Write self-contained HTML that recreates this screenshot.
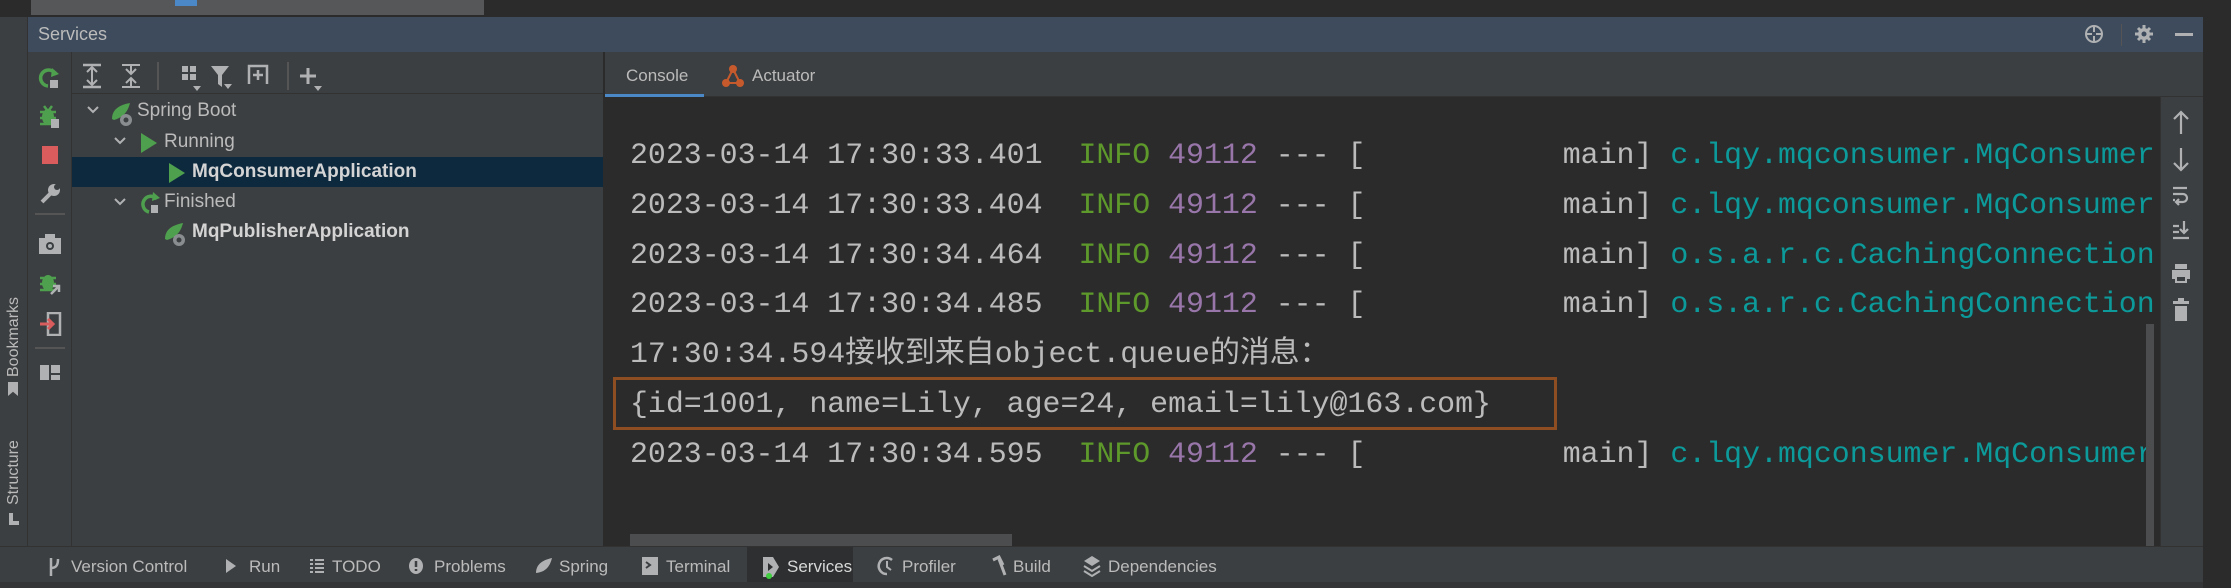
<!DOCTYPE html>
<html><head><meta charset="utf-8"><style>
*{margin:0;padding:0;box-sizing:border-box}
body{width:2231px;height:588px;overflow:hidden;background:#2b2b2b;position:relative;font-family:"Liberation Sans","Noto Sans CJK SC",sans-serif;color:#bbbbbb}
.a{position:absolute}
.t{position:absolute;white-space:pre;font-size:18px;line-height:20px}
.mono{position:absolute;white-space:pre;font-family:"Liberation Mono","Noto Sans CJK SC",monospace;font-size:29.9px;line-height:34px;color:#bbbbbb}
.g{color:#5e9a2b}.p{color:#9876aa}.c{color:#0c9a9a}
</style></head><body>
<div class="a" style="left:0;top:0;width:2231px;height:17px;background:#2b2b2b"></div>
<div class="a" style="left:31px;top:0;width:453px;height:15px;background:#555759"></div>
<div class="a" style="left:175px;top:0;width:22px;height:6px;background:#4a88c7"></div>
<div class="a" style="left:2203px;top:0;width:28px;height:588px;background:#2b2b2b"></div>
<div class="a" style="left:28px;top:17px;width:2175px;height:35px;background:#3d4b5c"></div>
<div class="t" style="left:38px;top:24px;font-size:18px;color:#bbbbbb">Services</div>
<svg class="a" style="left:2084px;top:24px" width="20" height="20" viewBox="0 0 20 20"><circle cx="10" cy="10" r="8" fill="none" stroke="#afb1b3" stroke-width="2"/><path d="M10 2v6M10 12v6M2 10h6M12 10h6" stroke="#afb1b3" stroke-width="2"/></svg>
<div class="a" style="left:2121px;top:24px;width:1px;height:22px;background:#555"></div>
<svg class="a" style="left:2135px;top:25px" width="18" height="18" viewBox="0 0 18 18"><circle cx="9" cy="9" r="6" fill="#afb1b3"/><path d="M9 0v18M0 9h18M3 3l12 12M15 3L3 15" stroke="#afb1b3" stroke-width="3"/><circle cx="9" cy="9" r="2.5" fill="#3d4b5c"/></svg>
<div class="a" style="left:2175px;top:33px;width:18px;height:3px;background:#afb1b3"></div>
<div class="a" style="left:0;top:17px;width:28px;height:529px;background:#3c3f41;border-right:1px solid #323232"></div>
<div class="t" style="left:4px;top:377px;transform:rotate(-90deg);transform-origin:0 0;font-size:16px;color:#bbb">Bookmarks</div>
<div class="a" style="left:8px;top:382px;width:10px;height:14px;background:#afb1b3;clip-path:polygon(0 0,100% 0,100% 100%,50% 70%,0 100%)"></div>
<div class="t" style="left:4px;top:505px;transform:rotate(-90deg);transform-origin:0 0;font-size:16px;color:#bbb">Structure</div>
<div class="a" style="left:9px;top:513px;width:10px;height:12px;border-left:4px solid #afb1b3;border-bottom:4px solid #afb1b3"></div>
<div class="a" style="left:28px;top:52px;width:44px;height:494px;background:#3c3f41;border-right:1px solid #323232"></div>
<svg class="a" style="left:38px;top:66px" width="24" height="24" viewBox="0 0 24 24"><path d="M18 9A8 8 0 1 0 10 20" fill="none" stroke="#4ea04e" stroke-width="3.5"/><path d="M14 2l7 6-8 3z" fill="#4ea04e"/><rect x="12" y="14" width="8" height="8" fill="#afb1b3"/></svg>
<svg class="a" style="left:38px;top:104px" width="24" height="26" viewBox="0 0 24 26"><ellipse cx="10" cy="13" rx="6" ry="8" fill="#4ea04e"/><path d="M2 8h16M2 14h16M2 20h16M6 2l3 4M14 2l-3 4" stroke="#4ea04e" stroke-width="2.5"/><rect x="13" y="15" width="8" height="9" fill="#afb1b3"/></svg>
<div class="a" style="left:42px;top:146px;width:16px;height:18px;background:#db5c5c"></div>
<svg class="a" style="left:38px;top:182px" width="24" height="24" viewBox="0 0 24 24"><path d="M4 20L14 10" stroke="#afb1b3" stroke-width="4"/><circle cx="16" cy="8" r="6" fill="#afb1b3"/><circle cx="19" cy="5" r="3" fill="#3c3f41"/></svg>
<div class="a" style="left:35px;top:213px;width:30px;height:2px;background:#555"></div>
<svg class="a" style="left:39px;top:234px" width="22" height="20" viewBox="0 0 22 20"><rect x="0" y="4" width="22" height="16" fill="#afb1b3"/><rect x="6" y="0" width="10" height="5" fill="#afb1b3"/><circle cx="11" cy="12" r="4" fill="#3c3f41"/><circle cx="11" cy="12" r="2" fill="#afb1b3"/></svg>
<svg class="a" style="left:38px;top:270px" width="24" height="26" viewBox="0 0 24 26"><ellipse cx="10" cy="13" rx="6" ry="8" fill="#4ea04e"/><path d="M2 8h16M2 14h16M2 20h16" stroke="#4ea04e" stroke-width="2.5"/><path d="M13 24l8-8M15 16h6v6" stroke="#afb1b3" stroke-width="2.5" fill="none"/></svg>
<svg class="a" style="left:40px;top:312px" width="22" height="24" viewBox="0 0 22 24"><rect x="8" y="1" width="12" height="22" fill="none" stroke="#afb1b3" stroke-width="2.5"/><path d="M0 12h12M8 7l5 5-5 5" stroke="#db5c5c" stroke-width="3" fill="none"/></svg>
<div class="a" style="left:35px;top:347px;width:30px;height:2px;background:#555"></div>
<div class="a" style="left:40px;top:365px;width:9px;height:15px;background:#afb1b3"></div><div class="a" style="left:51px;top:365px;width:9px;height:8px;background:#afb1b3"></div><div class="a" style="left:51px;top:375px;width:9px;height:5px;background:#afb1b3"></div>
<div class="a" style="left:72px;top:52px;width:531px;height:494px;background:#3c3f41"></div>
<div class="a" style="left:72px;top:93px;width:531px;height:1px;background:#323232"></div>
<svg class="a" style="left:82px;top:62px" width="200" height="30" viewBox="0 0 200 30">
<g fill="#afb1b3" stroke="#afb1b3">
<path d="M1 3h18M1 25h18" stroke-width="2.5"/><path d="M10 6v16M5 10l5-5 5 5M5 18l5 5 5-5" stroke-width="2" fill="none"/>
<path d="M40 3h18M40 25h18" stroke-width="2"/>
<path d="M49 3v8M44 7l5 5 5-5M49 25v-8M44 21l5-5 5 5" stroke-width="2" fill="none"/>
</g>
<rect x="100" y="4" width="6" height="6" fill="#afb1b3"/><rect x="108" y="4" width="6" height="6" fill="#afb1b3"/><rect x="100" y="12" width="6" height="6" fill="#afb1b3"/><rect x="108" y="12" width="6" height="6" fill="#afb1b3"/><path d="M111 24h8l-4 5z" fill="#afb1b3"/>
<path d="M129 4h18l-7 9v12l-4-3v-9z" fill="#afb1b3"/><path d="M142 22h8l-4 5z" fill="#afb1b3"/>
<path d="M167 22V4h18v18M176 8v10M171 13h10" stroke="#afb1b3" stroke-width="2.5" fill="none"/>
</svg>
<div class="a" style="left:157px;top:62px;width:2px;height:28px;background:#555"></div>
<div class="a" style="left:287px;top:62px;width:2px;height:28px;background:#555"></div>
<svg class="a" style="left:298px;top:66px" width="28" height="28" viewBox="0 0 28 28"><path d="M10 2v16M2 10h16" stroke="#afb1b3" stroke-width="3"/><path d="M16 20h8l-4 5z" fill="#afb1b3"/></svg>
<div class="a" style="left:72px;top:157px;width:531px;height:30px;background:#0d293e"></div>
<svg class="a" style="left:86px;top:103px" width="14" height="14" viewBox="0 0 14 14"><path d="M2 4l5 5 5-5" stroke="#afb1b3" stroke-width="2" fill="none"/></svg>
<svg class="a" style="left:113px;top:134px" width="14" height="14" viewBox="0 0 14 14"><path d="M2 4l5 5 5-5" stroke="#afb1b3" stroke-width="2" fill="none"/></svg>
<svg class="a" style="left:113px;top:195px" width="14" height="14" viewBox="0 0 14 14"><path d="M2 4l5 5 5-5" stroke="#afb1b3" stroke-width="2" fill="none"/></svg>
<svg class="a" style="left:110px;top:101px" width="26" height="26" viewBox="0 0 26 26"><path d="M2 18C2 8 10 4 20 2c-2 8-6 14-16 17z" fill="#4ea04e"/><circle cx="16" cy="19" r="6" fill="#8a8d8f"/><circle cx="16" cy="19" r="2.5" fill="#3c3f41"/></svg>
<div class="t" style="left:137px;top:101px;font-size:19px">Spring Boot</div>
<div class="a" style="left:141px;top:133px;width:0;height:0;border-left:16px solid #4ea04e;border-top:10px solid transparent;border-bottom:10px solid transparent"></div>
<div class="t" style="left:164px;top:132px;font-size:19px">Running</div>
<div class="a" style="left:169px;top:163px;width:0;height:0;border-left:16px solid #4ea04e;border-top:10px solid transparent;border-bottom:10px solid transparent"></div>
<div class="t" style="left:192px;top:162px;font-size:19px;font-weight:bold;color:#d4d4d4">MqConsumerApplication</div>
<svg class="a" style="left:139px;top:190px" width="24" height="26" viewBox="0 0 24 26"><path d="M18 9A8 8 0 1 0 10 22" fill="none" stroke="#4ea04e" stroke-width="3.5"/><path d="M14 2l7 6-8 3z" fill="#4ea04e"/><rect x="12" y="15" width="7" height="8" fill="#afb1b3"/></svg>
<div class="t" style="left:164px;top:192px;font-size:19px">Finished</div>
<svg class="a" style="left:163px;top:221px" width="26" height="26" viewBox="0 0 26 26"><path d="M2 18C2 8 10 4 20 2c-2 8-6 14-16 17z" fill="#4ea04e"/><circle cx="16" cy="19" r="6" fill="#8a8d8f"/><circle cx="16" cy="19" r="2.5" fill="#3c3f41"/></svg>
<div class="t" style="left:192px;top:222px;font-size:19px;font-weight:bold;color:#d4d4d4">MqPublisherApplication</div>
<div class="a" style="left:603px;top:52px;width:2px;height:494px;background:#2b2b2b"></div>
<div class="a" style="left:605px;top:52px;width:1598px;height:45px;background:#3c3f41;border-bottom:1px solid #323232"></div>
<div class="a" style="left:605px;top:94px;width:99px;height:3px;background:#4a88c7"></div>
<div class="t" style="left:626px;top:66px;font-size:17px">Console</div>
<svg class="a" style="left:722px;top:64px" width="22" height="24" viewBox="0 0 22 24"><path d="M11 5L4 19M11 5l7 14M4 19h14" stroke="#c75a2c" stroke-width="2"/><circle cx="11" cy="5" r="4" fill="#c75a2c"/><circle cx="4" cy="19" r="4" fill="#c75a2c"/><circle cx="18" cy="19" r="4" fill="#c75a2c"/></svg>
<div class="t" style="left:752px;top:66px;font-size:17px">Actuator</div>
<div class="a" style="left:605px;top:97px;width:1555px;height:449px;overflow:hidden">
<div class="a" style="left:0;top:0;width:1548px;height:449px;overflow:hidden">
<div class="mono" style="left:25px;top:41px">2023-03-14 17:30:33.401  <span class="g">INFO</span> <span class="p">49112</span> --- [           main] <span class="c">c.lqy.mqconsumer.MqConsumerApplication</span></div>
<div class="mono" style="left:25px;top:91px">2023-03-14 17:30:33.404  <span class="g">INFO</span> <span class="p">49112</span> --- [           main] <span class="c">c.lqy.mqconsumer.MqConsumerApplication</span></div>
<div class="mono" style="left:25px;top:141px">2023-03-14 17:30:34.464  <span class="g">INFO</span> <span class="p">49112</span> --- [           main] <span class="c">o.s.a.r.c.CachingConnectionFactory</span></div>
<div class="mono" style="left:25px;top:190px">2023-03-14 17:30:34.485  <span class="g">INFO</span> <span class="p">49112</span> --- [           main] <span class="c">o.s.a.r.c.CachingConnectionFactory</span></div>
<div class="mono" style="left:25px;top:240px">17:30:34.594接收到来自object.queue的消息：</div>
<div class="mono" style="left:25px;top:290px">{id=1001, name=Lily, age=24, email=lily@163.com}</div>
<div class="mono" style="left:25px;top:340px">2023-03-14 17:30:34.595  <span class="g">INFO</span> <span class="p">49112</span> --- [           main] <span class="c">c.lqy.mqconsumer.MqConsumerApplication</span></div>
</div>
<div class="a" style="left:8px;top:280px;width:944px;height:53px;border:3.5px solid #8f4e22"></div>
<div class="a" style="left:25px;top:437px;width:382px;height:12px;background:#4b4d4f"></div>
<div class="a" style="left:1541px;top:227px;width:8px;height:222px;background:#4b4d4f"></div>
</div>
<div class="a" style="left:2160px;top:97px;width:43px;height:449px;background:#3c3f41;border-left:1px solid #323232"></div>
<svg class="a" style="left:2168px;top:108px" width="26" height="220" viewBox="0 0 26 220">
<g stroke="#afb1b3" stroke-width="2.2" fill="none">
<path d="M13 4v22M6 11l7-7 7 7"/>
<path d="M13 40v22M6 55l7 7 7-7"/>
<path d="M5 80h14M5 86h10a4 4 0 0 1 0 8h-6M11 91l-3 3 3 3M5 92h2"/>
<path d="M5 118h6M5 124h6M5 130h16M16 113v12M12 121l4 4 4-4"/>
</g>
<rect x="7" y="156" width="12" height="5" fill="#afb1b3"/><rect x="4" y="162" width="18" height="9" fill="#afb1b3"/><rect x="8" y="168" width="10" height="6" fill="#3c3f41" stroke="#afb1b3" stroke-width="2"/>
<rect x="5" y="193" width="16" height="3" fill="#afb1b3"/><rect x="10" y="190" width="6" height="3" fill="#afb1b3"/><rect x="7" y="198" width="12" height="15" fill="#afb1b3"/>
</svg>
<div class="a" style="left:0;top:546px;width:2203px;height:42px;background:#3c3f41;border-top:1px solid #323232"></div>
<div class="a" style="left:747px;top:547px;width:106px;height:35px;background:#2d2f30"></div>
<div class="a" style="left:0;top:582px;width:2203px;height:6px;background:#333537"></div>
<svg class="a" style="left:47px;top:556px" width="14" height="22" viewBox="0 0 14 22"><path d="M4 2v18M4 12c6 0 7-4 7-9" stroke="#afb1b3" stroke-width="2.5" fill="none"/></svg>
<div class="t" style="left:71px;top:557px;font-size:17px">Version Control</div>
<div class="a" style="left:226px;top:559px;width:0;height:0;border-left:10px solid #afb1b3;border-top:7px solid transparent;border-bottom:7px solid transparent"></div>
<div class="t" style="left:249px;top:557px;font-size:17px">Run</div>
<svg class="a" style="left:310px;top:558px" width="14" height="16" viewBox="0 0 14 16"><path d="M0 2h3M5 2h9M0 6h3M5 6h9M0 10h3M5 10h9M0 14h3M5 14h9" stroke="#afb1b3" stroke-width="2"/></svg>
<div class="t" style="left:332px;top:557px;font-size:17px">TODO</div>
<svg class="a" style="left:408px;top:557px" width="16" height="18" viewBox="0 0 16 18"><ellipse cx="8" cy="9" rx="7" ry="8" fill="#afb1b3"/><path d="M8 4v6M8 12v2" stroke="#3c3f41" stroke-width="2.5"/></svg>
<div class="t" style="left:434px;top:557px;font-size:17px">Problems</div>
<svg class="a" style="left:535px;top:557px" width="18" height="18" viewBox="0 0 18 18"><path d="M1 16C1 7 8 3 17 1c-2 8-6 14-16 15z" fill="#afb1b3"/></svg>
<div class="t" style="left:559px;top:557px;font-size:17px">Spring</div>
<svg class="a" style="left:642px;top:557px" width="16" height="18" viewBox="0 0 16 18"><rect x="0" y="0" width="16" height="18" fill="#afb1b3"/><path d="M4 5l4 3-4 3" stroke="#3c3f41" stroke-width="2" fill="none"/></svg>
<div class="t" style="left:666px;top:557px;font-size:17px">Terminal</div>
<svg class="a" style="left:761px;top:555px" width="20" height="24" viewBox="0 0 20 24"><path d="M2 2h10l6 10-6 10H2z" fill="#afb1b3"/><path d="M7 8l5 4-5 4z" fill="#2d2f30"/><circle cx="8" cy="21" r="3" fill="#3fcf3f"/></svg>
<div class="t" style="left:787px;top:557px;font-size:17px;color:#d8d8d8">Services</div>
<svg class="a" style="left:877px;top:555px" width="20" height="22" viewBox="0 0 20 22"><path d="M15 5A8 8 0 1 0 10 19" stroke="#afb1b3" stroke-width="2.5" fill="none"/><path d="M10 6v6l4 3" stroke="#afb1b3" stroke-width="2" fill="none"/></svg>
<div class="t" style="left:902px;top:557px;font-size:17px">Profiler</div>
<svg class="a" style="left:990px;top:555px" width="18" height="22" viewBox="0 0 18 22"><path d="M3 5l6-3 4 8M9 4l6 16" stroke="#afb1b3" stroke-width="3" fill="none"/></svg>
<div class="t" style="left:1013px;top:557px;font-size:17px">Build</div>
<svg class="a" style="left:1083px;top:555px" width="18" height="22" viewBox="0 0 18 22"><path d="M9 1l8 5-8 5-8-5z" fill="#afb1b3"/><path d="M1 11l8 5 8-5M1 16l8 5 8-5" stroke="#afb1b3" stroke-width="2" fill="none"/></svg>
<div class="t" style="left:1108px;top:557px;font-size:17px">Dependencies</div>
</body></html>
